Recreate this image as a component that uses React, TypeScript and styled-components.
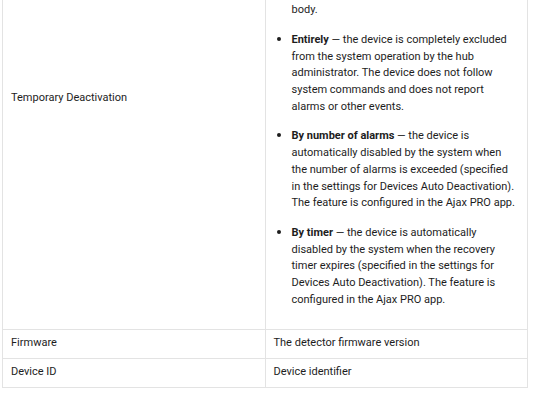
import React from "react";
import styled, { createGlobalStyle } from "styled-components";

const GlobalStyle = createGlobalStyle`
  html, body {
    margin: 0;
    padding: 0;
    background: #ffffff;
    overflow: hidden;
  }
  body {
    font-family: Roboto, "Liberation Sans", Arial, sans-serif;
    color: #1d1d1d;
    -webkit-font-smoothing: antialiased;
  }
`;

const Page = styled.div`
  padding: 0 8px 0 2px;
  margin-top: -134px;
`;

const Table = styled.table`
  width: 526px;
  border-collapse: collapse;
  table-layout: fixed;
  font-size: 11px;
  line-height: 16.7px;
`;

const Cell = styled.td<{ $narrow?: boolean }>`
  border: 1px solid #e3e3e3;
  padding: ${({ $narrow }) => ($narrow ? "5px 8px 6px" : "12px 8px")};
  vertical-align: middle;
  width: 50%;
`;

const Para = styled.p`
  margin: 10px 0 12px;
`;

const List = styled.ul`
  margin: 0 0 9px;
  padding-left: 18px;
  list-style: disc;
`;

const Item = styled.li`
  margin-bottom: 12px;
  &:last-child {
    margin-bottom: 0;
  }
  &::marker {
    font-size: 13px;
  }
`;

const Term = styled.b`
  font-weight: 700;
`;

export default function App() {
  return (
    <>
      <GlobalStyle />
      <Page>
        <Table>
          <tbody>
            <tr>
              <Cell>Temporary Deactivation</Cell>
              <Cell>
                <Para>
                  Allows the user to disable the device without removing it from
                  the system. Four options are available, and each of them is
                  set by the hub administrator:
                </Para>
                <List>
                  <Item>
                    <Term>Lid only</Term> — the system ignores notifications
                    about triggering of the tamper button on the body.
                  </Item>
                  <Item>
                    <Term>Entirely</Term> — the device is completely excluded
                    from the system operation by the hub administrator. The
                    device does not follow system commands and does not report
                    alarms or other events.
                  </Item>
                  <Item>
                    <Term>By number of alarms</Term> — the device is
                    automatically disabled by the system when the number of
                    alarms is exceeded (specified in the settings for Devices
                    Auto Deactivation). The feature is configured in the Ajax
                    PRO app.
                  </Item>
                  <Item>
                    <Term>By timer</Term> — the device is automatically disabled
                    by the system when the recovery timer expires (specified in
                    the settings for Devices Auto Deactivation). The feature is
                    configured in the Ajax PRO app.
                  </Item>
                </List>
              </Cell>
            </tr>
            <tr>
              <Cell $narrow>Firmware</Cell>
              <Cell $narrow>The detector firmware version</Cell>
            </tr>
            <tr>
              <Cell $narrow>Device ID</Cell>
              <Cell $narrow>Device identifier</Cell>
            </tr>
          </tbody>
        </Table>
      </Page>
    </>
  );
}
